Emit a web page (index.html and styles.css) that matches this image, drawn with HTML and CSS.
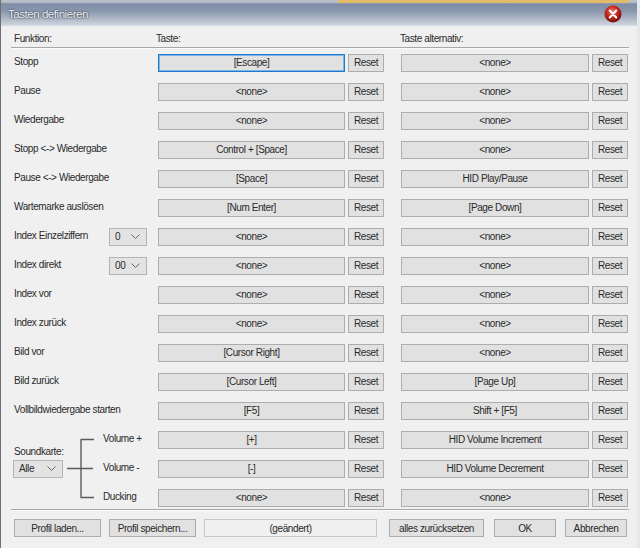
FILE: index.html
```html
<!DOCTYPE html>
<html lang="de">
<head>
<meta charset="utf-8">
<title>Tasten definieren</title>
<link rel="stylesheet" href="styles.css">
</head>
<body>
<div class="window">
  <div class="titlebar">
    <span class="title">Tasten definieren</span>
    <span class="close">
      <svg width="18" height="18" viewBox="0 0 18 18">
        <defs>
          <radialGradient id="rg" cx="45%" cy="35%" r="65%">
            <stop offset="0" stop-color="#f07a6a"/>
            <stop offset="0.5" stop-color="#c8281c"/>
            <stop offset="1" stop-color="#6e0e08"/>
          </radialGradient>
        </defs>
        <circle cx="9" cy="9" r="8.5" fill="url(#rg)"/>
        <path d="M5.8 5.6 L12.2 12.4 M12.2 5.6 L5.8 12.4" stroke="#fff" stroke-width="2.2" stroke-linecap="round"/>
      </svg>
    </span>
  </div>
  <div class="content">
    <div class="table head">
      <div class="hcell c1">Funktion:</div>
      <div class="hcell c2">Taste:</div>
      <div class="hcell c4">Taste alternativ:</div>
    </div>
    <div class="sep"></div>
    <div class="table rows">
      <div class="lbl">Stopp</div>
      <div class="btn key focus">[Escape]</div><div class="btn reset">Reset</div>
      <div class="btn key alt">&lt;none&gt;</div><div class="btn reset">Reset</div>

      <div class="lbl">Pause</div>
      <div class="btn key">&lt;none&gt;</div><div class="btn reset">Reset</div>
      <div class="btn key alt">&lt;none&gt;</div><div class="btn reset">Reset</div>

      <div class="lbl">Wiedergabe</div>
      <div class="btn key">&lt;none&gt;</div><div class="btn reset">Reset</div>
      <div class="btn key alt">&lt;none&gt;</div><div class="btn reset">Reset</div>

      <div class="lbl">Stopp &lt;-&gt; Wiedergabe</div>
      <div class="btn key">Control + [Space]</div><div class="btn reset">Reset</div>
      <div class="btn key alt">&lt;none&gt;</div><div class="btn reset">Reset</div>

      <div class="lbl">Pause &lt;-&gt; Wiedergabe</div>
      <div class="btn key">[Space]</div><div class="btn reset">Reset</div>
      <div class="btn key alt">HID Play/Pause</div><div class="btn reset">Reset</div>

      <div class="lbl">Wartemarke auslösen</div>
      <div class="btn key">[Num Enter]</div><div class="btn reset">Reset</div>
      <div class="btn key alt">[Page Down]</div><div class="btn reset">Reset</div>

      <div class="lbl"><span>Index Einzelziffern</span>
        <span class="combo small"><span>0</span><svg width="9" height="5" viewBox="0 0 9 5"><path d="M0.5 0.5 L4.5 4.5 L8.5 0.5" fill="none" stroke="#666"/></svg></span>
      </div>
      <div class="btn key">&lt;none&gt;</div><div class="btn reset">Reset</div>
      <div class="btn key alt">&lt;none&gt;</div><div class="btn reset">Reset</div>

      <div class="lbl"><span>Index direkt</span>
        <span class="combo small"><span>00</span><svg width="9" height="5" viewBox="0 0 9 5"><path d="M0.5 0.5 L4.5 4.5 L8.5 0.5" fill="none" stroke="#666"/></svg></span>
      </div>
      <div class="btn key">&lt;none&gt;</div><div class="btn reset">Reset</div>
      <div class="btn key alt">&lt;none&gt;</div><div class="btn reset">Reset</div>

      <div class="lbl">Index vor</div>
      <div class="btn key">&lt;none&gt;</div><div class="btn reset">Reset</div>
      <div class="btn key alt">&lt;none&gt;</div><div class="btn reset">Reset</div>

      <div class="lbl">Index zurück</div>
      <div class="btn key">&lt;none&gt;</div><div class="btn reset">Reset</div>
      <div class="btn key alt">&lt;none&gt;</div><div class="btn reset">Reset</div>

      <div class="lbl">Bild vor</div>
      <div class="btn key">[Cursor Right]</div><div class="btn reset">Reset</div>
      <div class="btn key alt">&lt;none&gt;</div><div class="btn reset">Reset</div>

      <div class="lbl">Bild zurück</div>
      <div class="btn key">[Cursor Left]</div><div class="btn reset">Reset</div>
      <div class="btn key alt">[Page Up]</div><div class="btn reset">Reset</div>

      <div class="lbl">Vollbildwiedergabe starten</div>
      <div class="btn key">[F5]</div><div class="btn reset">Reset</div>
      <div class="btn key alt">Shift + [F5]</div><div class="btn reset">Reset</div>

      <div class="sound">
        <div class="snd-label">Soundkarte:</div>
        <div class="combo big"><span>Alle</span><svg width="9" height="5" viewBox="0 0 9 5"><path d="M0.5 0.5 L4.5 4.5 L8.5 0.5" fill="none" stroke="#666"/></svg></div>
        <svg class="bracket" width="27" height="87" viewBox="0 0 27 87">
          <path d="M0 43.5 H26 M14 14.5 V72.5 M13.5 14.5 H27 M13.5 72.5 H27" fill="none" stroke="#5a5a5a" stroke-width="1.4"/>
        </svg>
        <div class="vlbl r1">Volume +</div>
        <div class="vlbl r2">Volume -</div>
        <div class="vlbl r3">Ducking</div>
      </div>
      <div class="btn key">[+]</div><div class="btn reset">Reset</div>
      <div class="btn key alt">HID Volume Increment</div><div class="btn reset">Reset</div>

      <div class="btn key">[-]</div><div class="btn reset">Reset</div>
      <div class="btn key alt">HID Volume Decrement</div><div class="btn reset">Reset</div>

      <div class="btn key">&lt;none&gt;</div><div class="btn reset">Reset</div>
      <div class="btn key alt">&lt;none&gt;</div><div class="btn reset">Reset</div>
    </div>
    <div class="sep bottom"></div>
    <div class="footer">
      <div class="btn fb w87">Profil laden...</div>
      <div class="btn fb w87">Profil speichern...</div>
      <div class="status">(geändert)</div>
      <div class="btn fb reset-all">alles zurücksetzen</div>
      <div class="btn fb ok">OK</div>
      <div class="btn fb cancel">Abbrechen</div>
    </div>
  </div>
</div>
</body>
</html>
```
FILE: styles.css
```css
html, body {
  margin: 0;
  padding: 0;
  width: 640px;
  height: 548px;
  overflow: hidden;
  background: #f0f0f0;
}

body {
  font-family: "Liberation Sans", Arial, sans-serif;
  font-size: 10px;
  letter-spacing: -0.4px;
  color: #2a2a2a;
}

.window {
  width: 640px;
  height: 548px;
  box-sizing: border-box;
  border-left: 1px solid #6f6f6f;
  border-right: 3px solid #e4e7ec;
  background: #f0f0f0;
  display: flex;
  flex-direction: column;
}

.titlebar {
  height: 26px;
  flex: none;
  display: flex;
  align-items: center;
  justify-content: space-between;
  padding: 0 15px 0 7px;
  background: linear-gradient(to bottom, #b9c0cc 0px, #b9c0cc 2px, #7e8ca6 4px, #8997ae 11px, #aab4c4 18px, #cfd5de 25px, #dde1e7 26px);
  position: relative;
}

.titlebar::before {
  content: "";
  position: absolute;
  left: 337px;
  right: 8px;
  top: 0;
  height: 3px;
  background: #e2bb67;
}

.title {
  font-size: 11.5px;
  letter-spacing: -0.45px;
  color: #f6f7f9;
  text-shadow: 0 0 2px #2a3344, 0 0 1px #2a3344;
  margin-top: 2px;
}

.close {
  display: flex;
  margin-top: 1px;
}

.content {
  flex: 1;
  padding: 4px 10px 0 12px;
}

.table {
  display: grid;
  grid-template-columns: 142px 187px 36px 202px 36px;
  column-gap: 3px;
}

.head {
  height: 16px;
  align-items: center;
}

.hcell.c1 { grid-column: 1; padding-left: 1px; }
.hcell.c2 { grid-column: 2; margin-left: -2px; }
.hcell.c4 { grid-column: 4; margin-left: 13px; }

.sep {
  height: 1px;
  background: #a7a7a7;
  border-bottom: 1px solid #fbfbfb;
  margin: 1px 0 0 -2px;
  width: 618px;
}

.rows {
  grid-auto-rows: 29px;
  align-items: center;
  margin-top: -1px;
}

.lbl {
  grid-column: 1;
  padding-left: 1px;
  display: flex;
  align-items: center;
  justify-content: space-between;
  margin-top: -3px;
}

.btn {
  height: 18px;
  box-sizing: border-box;
  border: 1px solid #adadad;
  background: #e1e1e1;
  display: flex;
  align-items: center;
  justify-content: center;
  white-space: nowrap;
}

.key.focus {
  border-color: #1b7bd0;
  box-shadow: inset 0 0 0 1px #7fb4e3;
}

.key.alt {
  width: 188px;
  justify-self: end;
}

.combo {
  height: 18px;
  box-sizing: border-box;
  border: 1px solid #b4b4b4;
  background: #e3e3e3;
  display: flex;
  align-items: center;
  justify-content: space-between;
  padding: 0 6px 0 5px;
}

.combo.small {
  width: 38px;
  margin-right: 8px;
  margin-top: 3px;
}

.combo.big {
  width: 50px;
  grid-column: 1;
  grid-row: 2;
  align-self: center;
}

.sound {
  grid-column: 1;
  grid-row: 14 / span 3;
  align-self: stretch;
  display: grid;
  grid-template-columns: 54px 27px 1fr;
  grid-template-rows: repeat(3, 29px);
}

.snd-label {
  grid-column: 1;
  grid-row: 1;
  align-self: end;
  margin-bottom: -3px;
  padding-left: 1px;
}

.bracket {
  grid-column: 2;
  grid-row: 1 / span 3;
  align-self: center;
}

.vlbl {
  grid-column: 3;
  align-self: center;
  padding-left: 9px;
  margin-top: -2px;
}

.vlbl.r1 { grid-row: 1; }
.vlbl.r2 { grid-row: 2; }
.vlbl.r3 { grid-row: 3; }

.sep.bottom {
  margin-top: -3px;
}

.footer {
  display: flex;
  align-items: center;
  margin-top: 8px;
  padding-left: 1px;
}

.fb { flex: none; }

.w87 { width: 87px; margin-right: 8px; }

.status {
  width: 174px;
  height: 18px;
  box-sizing: border-box;
  border: 1px solid #c8c8c8;
  background: #f0f0f0;
  display: flex;
  align-items: center;
  justify-content: center;
  margin-right: 12px;
}

.reset-all { width: 95px; margin-right: 10px; }
.ok { width: 62px; margin-right: 9px; }
.cancel { width: 62px; }
```
